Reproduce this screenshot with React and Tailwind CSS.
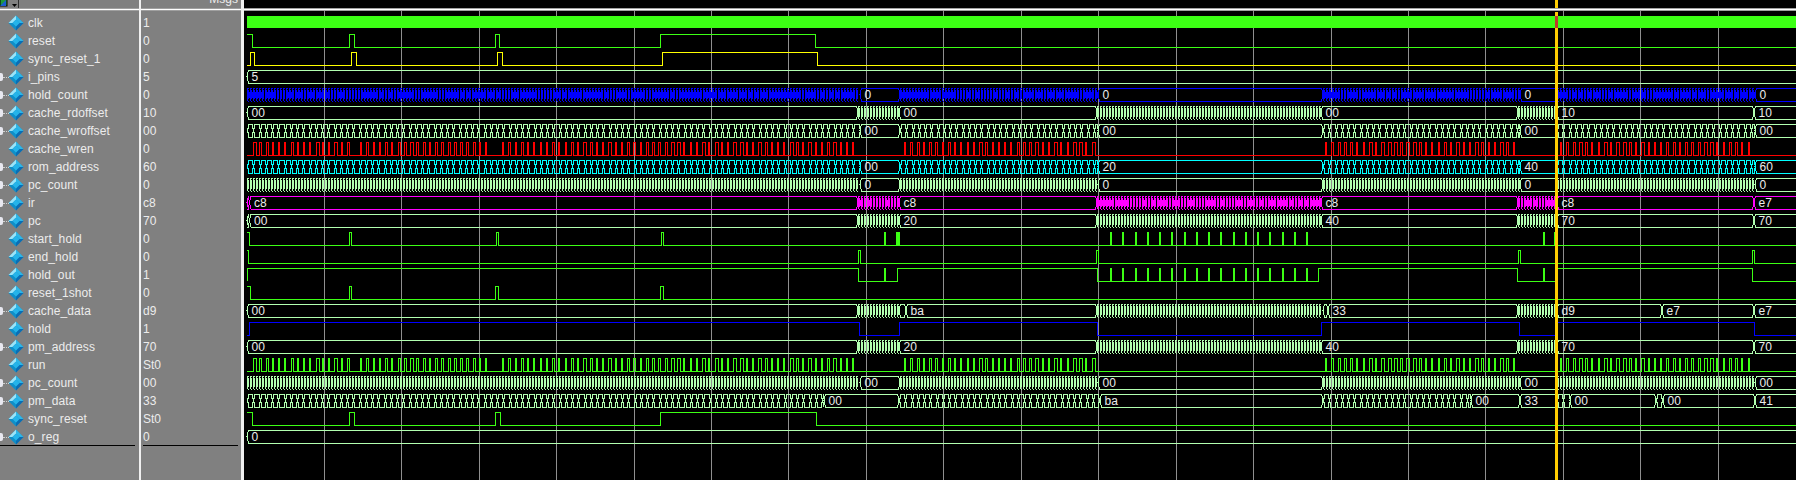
import React from "react";

const GREEN = "#3cff14";
const PALE = "#b2ffb0";
const BLUE = "#0000ff";
const RED = "#ff0000";
const CYAN = "#00ffff";
const MAGENTA = "#ff00ff";
const YELLOW = "#ffff00";
const END = 1796;

const signals = [
  { name: "clk", value: "1" },
  { name: "reset", value: "0" },
  { name: "sync_reset_1", value: "0" },
  { name: "i_pins", value: "5", tree: true },
  { name: "hold_count", value: "0", tree: true },
  { name: "cache_rdoffset", value: "10", tree: true },
  { name: "cache_wroffset", value: "00", tree: true },
  { name: "cache_wren", value: "0" },
  { name: "rom_address", value: "60", tree: true },
  { name: "pc_count", value: "0", tree: true },
  { name: "ir", value: "c8", tree: true },
  { name: "pc", value: "70", tree: true },
  { name: "start_hold", value: "0" },
  { name: "end_hold", value: "0" },
  { name: "hold_out", value: "1" },
  { name: "reset_1shot", value: "0" },
  { name: "cache_data", value: "d9", tree: true },
  { name: "hold", value: "1" },
  { name: "pm_address", value: "70", tree: true },
  { name: "run", value: "St0" },
  { name: "pc_count", value: "00", tree: true },
  { name: "pm_data", value: "33", tree: true },
  { name: "sync_reset", value: "St0" },
  { name: "o_reg", value: "0", tree: true },
];

const rowY = (i) => 22.5 + i * 18;

// repeatable pseudo random, the picture must not change between runs
const hash = (n) => {
  const s = Math.sin(n * 12.9898) * 43758.5453;
  return s - Math.floor(s);
};

// one bus value: long flat top and bottom, crossing at both ends
function valuePath(x0, x1, c) {
  const t = c - 6.5;
  const b = c + 6.5;
  return `M${x0} ${c}L${x0 + 1.5} ${t}H${x1 - 1.5}L${x1} ${c}L${x1 - 1.5} ${b}H${x0 + 1.5}Z`;
}

// busy bus, about six pixels a value, hollow boxes joined by a short neck
function mediumPath(x0, x1, c) {
  const t = c - 6.5;
  const b = c + 6.5;
  let d = "";
  for (let x = x0; x < x1 - 1; x += 6.25) {
    const a = Math.round(x) + 0.5;
    const e = Math.min(Math.round(x + 6.25), x1) + 0.5;
    d += `M${a + 1} ${t}H${e - 1}V${c - 2}H${e}V${c + 2}H${e - 1}V${b}H${a + 1}V${c + 2}H${a}V${c - 2}H${a + 1}Z`;
  }
  return d;
}

// very busy bus: stripes with dashes along the edges
function fastPath(x0, x1, c, dense) {
  const t = c - 6.5;
  const b = c + 6.5;
  let d = "";
  for (let x = Math.round(x0) + 0.5; x < x1 - 1; x += 3) {
    d += `M${x} ${t}V${b}M${x} ${t}H${x + 1}M${x} ${b}H${x + 1}`;
    d += `M${x + 1} ${t + 2}V${b - 2}`;
    if (dense && hash(x + c) < 0.6) d += `M${x + 2} ${c - 3}V${c + 3}`;
  }
  return d;
}

// a list of level changes to a step path
function stepPath(c, start, edges) {
  const hi = c - 6.5;
  const lo = c + 6.5;
  let level = start;
  let d = `M247 ${level ? hi : lo}`;
  edges.forEach((x) => {
    level = level ? 0 : 1;
    d += `H${x}V${level ? hi : lo}`;
  });
  return d + `H${END}`;
}

function pulses(ranges, seed) {
  const edges = [];
  ranges.forEach(([x0, x1]) => {
    for (let x = x0; x + 2 < x1; x += 6.25) {
      const r = hash(seed + Math.round(x));
      const w = r < 0.55 ? 1 : r < 0.8 ? 2 : 3;
      edges.push(Math.round(x), Math.round(x) + w);
    }
  });
  return edges;
}

const ticks = (x0, x1, step) => {
  const out = [];
  for (let x = x0; x < x1; x += step) out.push(Math.round(x), Math.round(x) + 1);
  return out;
};

const runRanges = [
  [253, 349],
  [360, 493],
  [502, 857],
  [904, 1097],
  [1325, 1519],
  [1560, 1754],
];

const longRow = (a, b, c, d) => [
  [247, 858, "v", a],
  [858, 899, "f"],
  [899, 1097, "v", b],
  [1097, 1321, "f"],
  [1321, 1518, "v", c],
  [1518, 1557, "f"],
  [1557, 1754, "v", d],
];

const busyRow = (kind, labels) => [
  [247, 860, kind],
  [860, 900, "v", labels[0]],
  [900, 1098, kind],
  [1098, 1323, "v", labels[1]],
  [1323, 1520, kind],
  [1520, 1557, "v", labels[2]],
  [1557, 1755, kind],
  [1755, END + 4, "v", labels[3]],
];

const waves = [
  { i: 1, color: GREEN, start: 1, edges: [252, 349, 354, 495, 499, 660, 815] },
  { i: 2, color: YELLOW, start: 0, edges: [250, 254, 351, 356, 497, 502, 662, 817] },
  { i: 3, color: PALE, cells: [[247, END + 4, "v", "5"]] },
  { i: 4, color: BLUE, dense: true, cells: busyRow("f", ["0", "0", "0", "0"]) },
  { i: 5, color: PALE, cells: [...longRow("00", "00", "00", "10"), [1754, END + 4, "v", "10"]] },
  { i: 6, color: PALE, cells: busyRow("m", ["00", "00", "00", "00"]) },
  { i: 7, color: RED, start: 0, edges: pulses(runRanges, 3) },
  { i: 8, color: CYAN, cells: busyRow("m", ["00", "20", "40", "60"]) },
  { i: 9, color: PALE, cells: busyRow("f", ["0", "0", "0", "0"]) },
  {
    i: 10,
    color: MAGENTA,
    dense: true,
    cells: [[247, 249.5, "v"], ...longRow("c8", "c8", "c8", "c8").map((c, n) => (n === 0 ? [249.5, 858, "v", "c8"] : c)), [1754, END + 4, "v", "e7"]],
  },
  {
    i: 11,
    color: PALE,
    cells: [[247, 249.5, "v"], ...longRow("00", "20", "40", "70").map((c, n) => (n === 0 ? [249.5, 858, "v", "00"] : c)), [1754, END + 4, "v", "70"]],
  },
  {
    i: 12,
    color: GREEN,
    start: 1,
    edges: [249, 349, 351, 496, 498, 661, 663, 884, 885, 896, 897, 898, 899, ...ticks(1110, 1318, 12.25), 1543, 1544, 1554, 1556],
  },
  { i: 13, color: GREEN, start: 1, edges: [248, 858, 860, 1096, 1098, 1518, 1520, 1752, 1754] },
  {
    i: 14,
    color: GREEN,
    start: 0,
    edges: [247, 858, 884, 885, 897, 1097, ...ticks(1110, 1318, 12.25), 1318, 1517, 1543, 1544, 1555, 1752],
  },
  { i: 15, color: GREEN, start: 1, edges: [250, 349, 351, 495, 498, 660, 663] },
  {
    i: 16,
    color: PALE,
    cells: [
      [247, 858, "v", "00"],
      [858, 899, "f"],
      [899, 906, "v"],
      [906, 1097, "v", "ba"],
      [1097, 1323, "f"],
      [1323, 1328, "v"],
      [1328, 1518, "v", "33"],
      [1518, 1557, "f"],
      [1557, 1662, "v", "d9"],
      [1662, 1754, "v", "e7"],
      [1754, END + 4, "v", "e7"],
    ],
  },
  { i: 17, color: BLUE, start: 0, edges: [249, 859, 899, 1097, 1321, 1519, 1557, 1754] },
  { i: 18, color: PALE, cells: [...longRow("00", "20", "40", "70"), [1754, END + 4, "v", "70"]] },
  { i: 19, color: GREEN, start: 0, edges: pulses(runRanges, 3) },
  { i: 20, color: PALE, cells: busyRow("f", ["00", "00", "00", "00"]) },
  {
    i: 21,
    color: PALE,
    cells: [
      [247, 824, "m"],
      [824, 899, "v", "00"],
      [899, 1100, "m"],
      [1100, 1323, "v", "ba"],
      [1323, 1471, "m"],
      [1471, 1520, "v", "00"],
      [1520, 1557, "v", "33"],
      [1557, 1570, "m"],
      [1570, 1656, "v", "00"],
      [1656, 1663, "m"],
      [1663, 1755, "v", "00"],
      [1755, END + 4, "v", "41"],
    ],
  },
  { i: 22, color: GREEN, start: 1, edges: [252, 349, 354, 495, 500, 660, 816] },
  { i: 23, color: PALE, cells: [[247, END + 4, "v", "0"]] },
];

function Wave({ wave }) {
  const c = rowY(wave.i);
  if (wave.edges) {
    return <path d={stepPath(c, wave.start, wave.edges)} fill="none" stroke={wave.color} />;
  }
  let d = "";
  wave.cells.forEach(([x0, x1, kind]) => {
    if (kind === "v") d += valuePath(x0, x1, c);
    if (kind === "m") d += mediumPath(x0, x1, c);
    if (kind === "f") d += fastPath(x0, x1, c, wave.dense);
  });
  return (
    <g>
      <path d={d} fill="none" stroke={wave.color} />
      {wave.cells
        .filter((cell) => cell[3])
        .map((cell) => (
          <text key={cell[0]} x={cell[0] + 4.5} y={c + 4.5} fill="#ececec" fontSize="12" fontFamily="'Liberation Sans', Arial, sans-serif">
            {cell[3]}
          </text>
        ))}
    </g>
  );
}

function WavePanel() {
  const grid = [];
  for (let k = 0; k < 19; k++) grid.push(Math.floor(324.3 + k * 77.44) + 0.5);
  return (
    <svg className="block shrink-0" width="1552" height="480" viewBox="244 0 1552 480" shapeRendering="crispEdges">
      <rect x="244" y="0" width="1552" height="480" fill="#000000" />
      {grid.map((x) => (
        <line key={x} x1={x} x2={x} y1="11" y2="480" stroke="#8f8f8f" />
      ))}
      <rect x="244" y="8" width="1552" height="3" fill="#a0a0a0" />
      <rect x="244" y="9" width="1552" height="1" fill="#ffffff" />
      <rect x="247" y="16" width="1549" height="12" fill={GREEN} />
      {waves.map((w) => (
        <Wave key={w.i} wave={w} />
      ))}
      {/* cursor */}
      <rect x="1555" y="0" width="3" height="8" fill="#ffcc00" />
      <rect x="1555" y="12" width="3" height="468" fill="#ffcc00" />
      <rect x="1555" y="16" width="3" height="12" fill="#c0392b" />
    </svg>
  );
}

function Diamond() {
  return (
    <svg className="block shrink-0" width="16" height="16" viewBox="0 0 16 16">
      <polygon points="8,0.5 15.5,8 8,15.5 0.5,8" fill="#0f8fc8" />
      <polygon points="8,0.5 0.5,8 4.5,8 8,4.5" fill="#9ce4f8" />
      <polygon points="8,0.5 15.5,8 11.5,8 8,4.5" fill="#2fb6e6" />
      <polygon points="8,15.5 15.5,8 11.5,8 8,11.5" fill="#0a6db4" />
      <polygon points="8,4.5 11.5,8 8,11.5 4.5,8" fill="#25b4ea" />
    </svg>
  );
}

function NameRow({ signal }) {
  return (
    <div className="relative flex h-[18px] items-center pl-[8px]">
      {signal.tree && (
        <>
          <span className="absolute left-0 top-[5px] h-[8px] w-[3px] rounded-r-[2px] bg-[#e8e8f0]" />
          <span className="absolute left-[3px] top-[9px] w-[6px] border-t border-dotted border-[#d0d0d0]" />
        </>
      )}
      <Diamond />
      <span className="ml-[4px] text-[12px] leading-none tracking-[0.1px] text-[#ececec]">{signal.name}</span>
    </div>
  );
}

export default function App() {
  return (
    <div
      className="flex h-[480px] w-[1796px] overflow-hidden bg-[#808080]"
      style={{ fontFamily: "'Liberation Sans', Arial, sans-serif" }}
    >
      {/* names */}
      <div className="w-[139px] shrink-0">
        <div className="flex h-[8px] items-start overflow-hidden">
          <svg className="block" width="20" height="8" viewBox="0 0 20 8">
            <rect x="0" y="-1" width="7" height="7" fill="#1d9a3c" stroke="#000000" />
            <polygon points="0,6 6,0 6,6" fill="#1a5fd0" />
            <polygon points="12,4 17,4 14.5,7" fill="#000000" />
            <rect x="18" y="0" width="1" height="8" fill="#303030" />
          </svg>
        </div>
        <div className="h-[3px] border-y border-[#a0a0a0] bg-white" />
        <div className="pt-[3px]">
          {signals.map((s, i) => (
            <NameRow key={i} signal={s} />
          ))}
        </div>
        <div className="mr-[4px] -mt-[1px] h-[1px] bg-black" />
      </div>
      <div className="w-[2px] shrink-0 bg-[#f0f0f0]" />

      {/* values */}
      <div className="w-[100px] shrink-0">
        <div className="flex h-[8px] items-end justify-end overflow-hidden pb-[3px] pr-[3px]">
          <span className="text-[12px] leading-[12px] text-[#ececec]">Msgs</span>
        </div>
        <div className="h-[3px] border-y border-[#a0a0a0] bg-white" />
        <div className="pt-[3px]">
          {signals.map((s, i) => (
            <div key={i} className="flex h-[18px] items-center pl-[2px] text-[12px] leading-none text-[#ececec]">
              {s.value}
            </div>
          ))}
        </div>
        <div className="ml-[2px] mr-[3px] -mt-[1px] h-[1px] bg-black" />
      </div>
      <div className="w-[3px] shrink-0 bg-[#f0f0f0]" />

      <WavePanel />
    </div>
  );
}
